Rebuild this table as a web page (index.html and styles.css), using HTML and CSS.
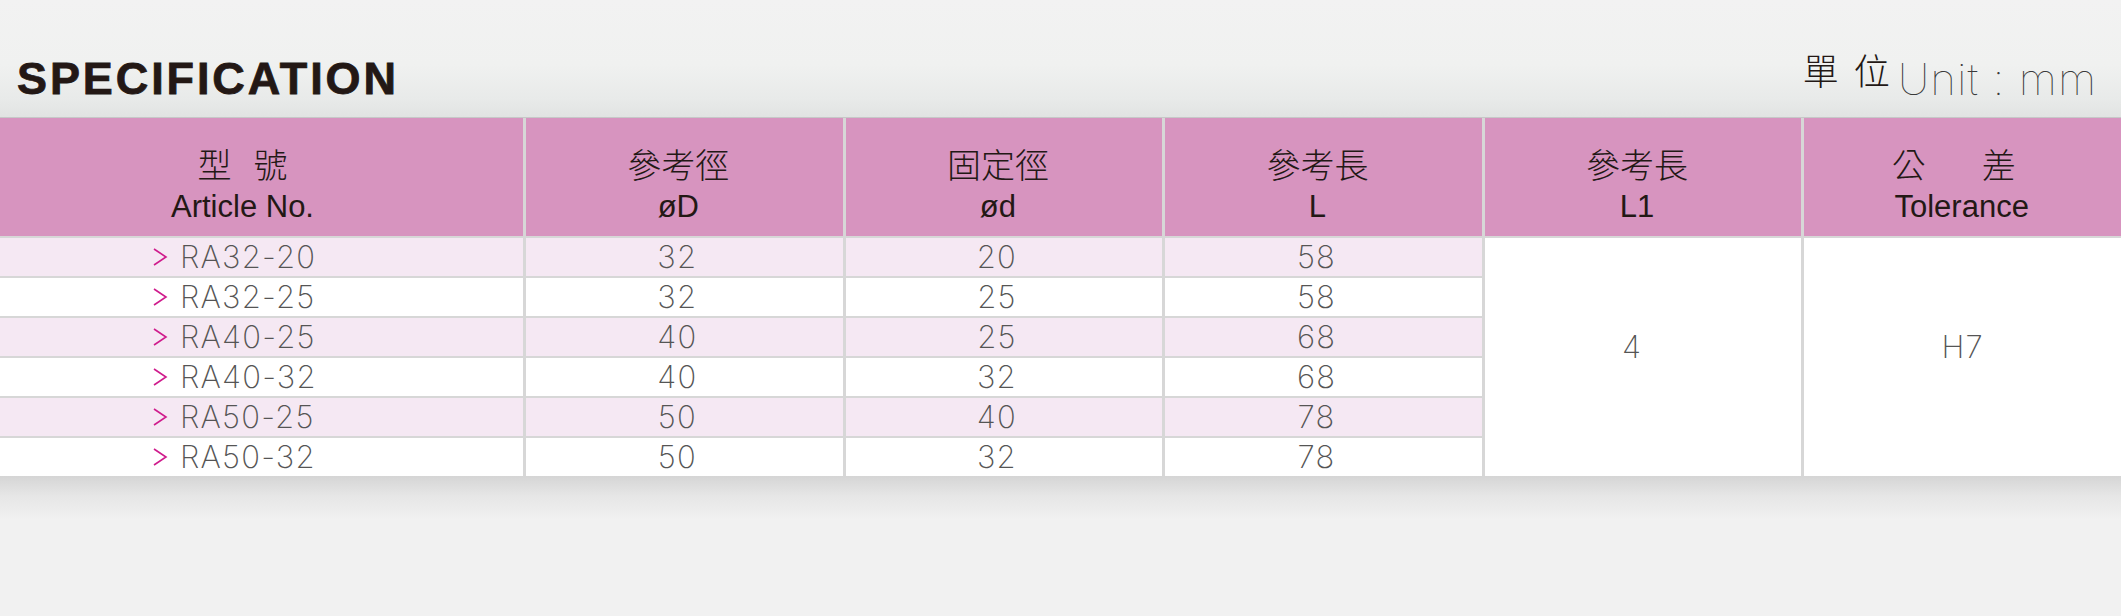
FILE: index.html
```html
<!DOCTYPE html>
<html lang="zh-Hant">
<head>
<meta charset="utf-8">
<title>Specification</title>
<link rel="stylesheet" href="styles.css">
</head>
<body>
<div class="page">
  <header class="topbar">
    <h1 class="title">SPECIFICATION</h1>
    <div class="unit"><span class="unit-cjk"><span>單</span><span>位</span></span><span class="unit-en">Unit : mm</span></div>
  </header>

  <div class="spec">
    <div class="hcell first"><span class="zh pair"><span>型</span><span>號</span></span><span class="en">Article No.</span></div>
    <div class="hcell"><span class="zh">參考徑</span><span class="en">øD</span></div>
    <div class="hcell"><span class="zh">固定徑</span><span class="en">ød</span></div>
    <div class="hcell"><span class="zh">參考長</span><span class="en">L</span></div>
    <div class="hcell"><span class="zh">參考長</span><span class="en">L1</span></div>
    <div class="hcell last"><span class="zh pair wide"><span>公</span><span>差</span></span><span class="en">Tolerance</span></div>

    <div class="cell merged col5">4</div>
    <div class="cell merged col6">H7</div>

    <div class="cell art odd"><svg class="chev" width="16" height="20" viewBox="0 0 16 20"><polyline points="2,2 14,10 2,18"/></svg>RA32-20</div>
    <div class="cell odd">32</div>
    <div class="cell odd">20</div>
    <div class="cell odd">58</div>

    <div class="cell art"><svg class="chev" width="16" height="20" viewBox="0 0 16 20"><polyline points="2,2 14,10 2,18"/></svg>RA32-25</div>
    <div class="cell">32</div>
    <div class="cell">25</div>
    <div class="cell">58</div>

    <div class="cell art odd"><svg class="chev" width="16" height="20" viewBox="0 0 16 20"><polyline points="2,2 14,10 2,18"/></svg>RA40-25</div>
    <div class="cell odd">40</div>
    <div class="cell odd">25</div>
    <div class="cell odd">68</div>

    <div class="cell art"><svg class="chev" width="16" height="20" viewBox="0 0 16 20"><polyline points="2,2 14,10 2,18"/></svg>RA40-32</div>
    <div class="cell">40</div>
    <div class="cell">32</div>
    <div class="cell">68</div>

    <div class="cell art odd"><svg class="chev" width="16" height="20" viewBox="0 0 16 20"><polyline points="2,2 14,10 2,18"/></svg>RA50-25</div>
    <div class="cell odd">50</div>
    <div class="cell odd">40</div>
    <div class="cell odd">78</div>

    <div class="cell art"><svg class="chev" width="16" height="20" viewBox="0 0 16 20"><polyline points="2,2 14,10 2,18"/></svg>RA50-32</div>
    <div class="cell">50</div>
    <div class="cell">32</div>
    <div class="cell">78</div>
  </div>
  <div class="shadow"></div>
</div>
</body>
</html>
```

FILE: styles.css
```css
html, body {
  margin: 0;
  padding: 0;
  background: #f1f1f1;
}

.page {
  width: 2121px;
  height: 616px;
  overflow: hidden;
  background: #f1f1f1;
}

.topbar {
  height: 118px;
  box-sizing: border-box;
  border-bottom: 1px solid #c6c8c7;
  display: flex;
  justify-content: space-between;
  align-items: flex-end;
  padding: 0 24px 16px 17px;
  background: linear-gradient(to bottom, #f2f2f2 0%, #f0f1f0 55%, #e8eae9 85%, #e1e3e2 100%);
}

.title {
  margin: 0;
  font-family: "Liberation Sans", Arial, sans-serif;
  font-weight: 700;
  font-size: 45px;
  line-height: 45px;
  letter-spacing: 2.9px;
  color: #231815;
  -webkit-text-stroke: 0.8px #231815;
}

.unit {
  display: flex;
  align-items: flex-end;
  color: #231815;
}

.unit-cjk {
  display: flex;
  gap: 15px;
  font-family: "Noto Sans CJK TC", "Noto Sans CJK SC", sans-serif;
  font-weight: 300;
  font-size: 36px;
  line-height: 40px;
  margin: 0 8px 12px 0;
}

.unit-en {
  font-family: "Inter", "Liberation Sans", sans-serif;
  font-weight: 100;
  font-size: 44px;
  line-height: 44px;
  letter-spacing: 1px;
  color: #3a3a3a;
}

.spec {
  display: grid;
  grid-template-columns: 523px repeat(5, 1fr);
  grid-template-rows: 118px repeat(6, 38px);
  column-gap: 3px;
  row-gap: 2px;
  background: #d7d7d7;
}

.hcell {
  background: #d794bf;
  display: flex;
  flex-direction: column;
  align-items: center;
  justify-content: center;
  padding: 17px 12px 0 0;
  color: #231815;
}

.hcell.first {
  padding-right: 38px;
}

.hcell.last {
  padding-right: 2px;
}

.hcell .zh {
  font-family: "Noto Sans CJK TC", "Noto Sans CJK SC", sans-serif;
  font-weight: 300;
  font-size: 34px;
  line-height: 40px;
  margin-bottom: 3px;
}

.hcell .pair {
  display: flex;
  gap: 22px;
}

.hcell .pair.wide {
  gap: 56px;
  margin-right: 16px;
}

.hcell .en {
  font-family: "Liberation Sans", Arial, sans-serif;
  font-size: 31px;
  line-height: 40px;
}

.cell {
  background: #ffffff;
  display: flex;
  align-items: center;
  justify-content: center;
  font-family: "Inter", "Liberation Sans", sans-serif;
  font-weight: 200;
  font-size: 31px;
  letter-spacing: 1.2px;
  color: #555555;
  padding: 0 14px 1px 0;
}

.cell.odd {
  background: #f5e8f3;
}

.cell.art {
  justify-content: flex-start;
  padding-left: 152px;
}

.chev {
  margin-right: 12px;
  fill: none;
  stroke: #cf1b8c;
  stroke-width: 1.6;
}

.merged {
  grid-row: 2 / span 6;
  background: #ffffff;
  padding: 0 0 22px 0;
}

.col5 {
  grid-column: 5;
  padding-right: 22px;
}

.col6 {
  grid-column: 6;
}

.shadow {
  height: 44px;
  background: linear-gradient(to bottom, #d5d5d5 0%, #e6e6e6 45%, #f1f1f1 100%);
}
```
